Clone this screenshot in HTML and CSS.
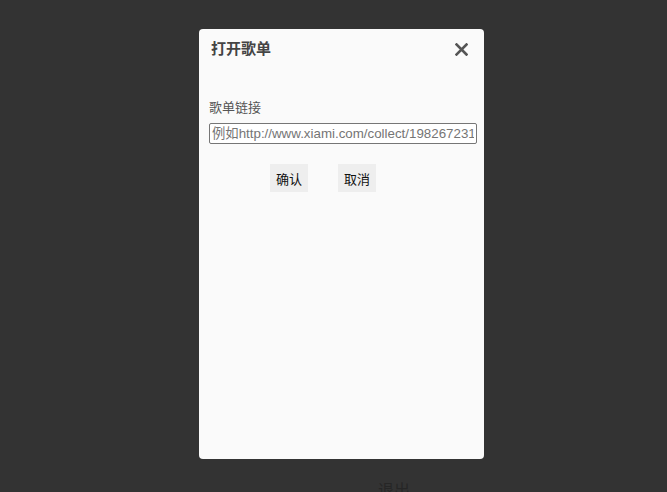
FILE: index.html
```html
<!DOCTYPE html>
<html lang="zh-CN">
<head>
    <title>打开歌单</title>
    <meta charset="utf-8">
    <link rel="stylesheet" href="styles.css">
</head>
<body>
<div class="dialog">
    <div class="dialog-heading">
        <span class="dialog-title">打开歌单</span>
        <span class="dialog-close">
            <svg width="13" height="13" viewBox="0 0 13 13">
                <path d="M1.5 1.5 L11.5 11.5 M11.5 1.5 L1.5 11.5" stroke="#555" stroke-width="2.6" stroke-linecap="square"/>
            </svg>
        </span>
    </div>
    <div class="dialog-body">
        <label class="field-label" for="playlist_url">歌单链接</label>
        <input class="form-control" type="text" id="playlist_url"
               placeholder="例如http://www.xiami.com/collect/198267231">
        <div class="form-buttons">
            <button class="btn" type="button">确认</button>
            <button class="btn" type="button">取消</button>
        </div>
    </div>
</div>
<div class="behind">退出</div>
</body>
</html>
```
FILE: styles.css
```css
html, body {
    margin: 0;
    height: 100%;
    overflow: hidden;
}

body {
    background-color: #333333;
    font-family: "Liberation Sans", "Noto Sans CJK SC", sans-serif;
}

.dialog {
    width: 285px;
    height: 430px;
    margin: 29px 0 0 199px;
    background-color: #fafafa;
    border-radius: 4px;
}

.dialog-heading {
    display: flex;
    justify-content: space-between;
    align-items: center;
    padding: 10px 16px 0 12px;
    height: 20px;
}

.dialog-title {
    font-size: 15px;
    font-weight: bold;
    color: #444;
    line-height: 20px;
}

.dialog-close {
    display: flex;
    width: 13px;
    height: 13px;
    margin-top: 1px;
}

.dialog-body {
    padding: 40px 8px 0 10px;
}

.field-label {
    display: block;
    font-size: 13px;
    line-height: 18px;
    color: #555;
}

.form-control {
    display: block;
    box-sizing: border-box;
    width: 268px;
    height: 21px;
    margin-top: 6px;
    padding: 1px 2px;
    font-family: "Liberation Sans", "Noto Sans CJK SC", sans-serif;
    font-size: 13.33px;
    border: 1px solid #767676;
    border-radius: 2px;
    background: #fff;
}

.form-control::placeholder {
    color: #757575;
}

.form-buttons {
    display: flex;
    gap: 30px;
    margin-top: 20px;
    padding-left: 61px;
}

.btn {
    height: 28px;
    padding: 0 6px;
    border: none;
    background-color: #eeeeee;
    font-family: "Liberation Sans", "Noto Sans CJK SC", sans-serif;
    font-size: 13px;
    color: #111;
}

.behind {
    margin: 18px 0 0 378px;
    font-size: 16px;
    color: #262626;
}
```
